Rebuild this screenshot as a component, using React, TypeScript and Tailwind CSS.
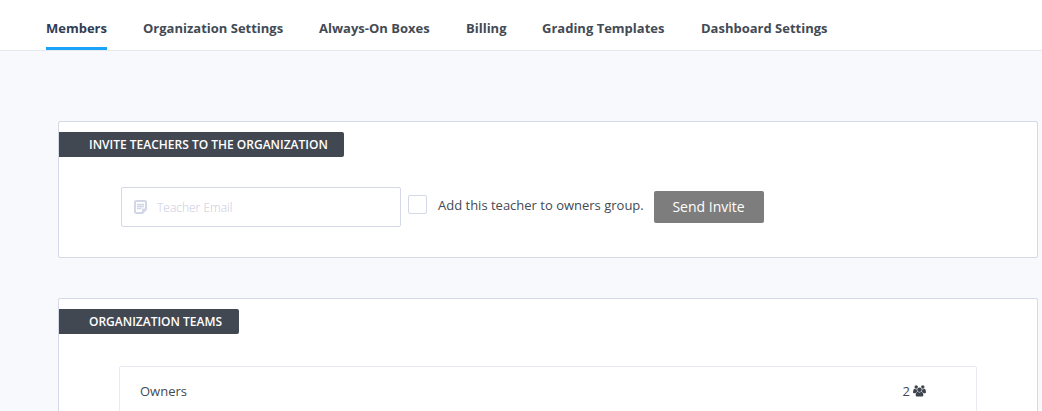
import type { ReactNode } from "react";

const tabs = [
  { label: "Members", width: "w-[61px]" },
  { label: "Organization Settings", width: "w-[140px]" },
  { label: "Always-On Boxes", width: "w-[111px]" },
  { label: "Billing", width: "w-[40px]" },
  { label: "Grading Templates", width: "w-[123px]" },
  { label: "Dashboard Settings", width: "w-[127px]" },
];

function NoteIcon() {
  return (
    <svg width="13" height="14" viewBox="0 0 13 14" className="shrink-0" fill="none" stroke="#d2d7e8">
      <path d="M2.3 1h8.4Q12 1 12 2.3V9L8.5 13H2.3Q1 13 1 11.7V2.3Q1 1 2.3 1Z" strokeWidth="2" />
      <path d="M12 9H8.5v4Z" fill="#d2d7e8" strokeWidth="1" />
      <path d="M3 4.5h7M3 6.5h7M3 8.5h4.5" strokeWidth="1.3" />
    </svg>
  );
}

function GroupIcon() {
  return (
    <svg width="13" height="12" viewBox="0 0 13 12" className="shrink-0" fill="#3d444e">
      <circle cx="3.2" cy="2" r="1.7" />
      <circle cx="9.8" cy="2" r="1.7" />
      <path d="M1.4 3.8Q2.6 4.6 3.6 4.1L4.4 6.6L3 8.2H1Q0 8.2 0 7.2Q0.1 4.3 1.4 3.8Z" />
      <path d="M11.6 3.8Q10.4 4.6 9.4 4.1L8.6 6.6L10 8.2H12Q13 8.2 13 7.2Q12.9 4.3 11.6 3.8Z" />
      <path
        d="M4.6 6.6Q6.5 8 8.4 6.6Q10.3 7.2 10.4 10Q10.4 11.5 9 11.5H4Q2.6 11.5 2.6 10Q2.7 7.2 4.6 6.6Z"
        stroke="#fff"
        strokeWidth="0.8"
        paintOrder="stroke"
      />
      <circle cx="6.5" cy="4.7" r="2.3" stroke="#fff" strokeWidth="0.8" paintOrder="stroke" />
    </svg>
  );
}

function Panel({ title, titleClass, className, children }: {
  title: string;
  titleClass: string;
  className: string;
  children: ReactNode;
}) {
  return (
    <section className={`ml-[58px] w-[980px] shrink-0 rounded-xs border border-[#d5d8e6] bg-white pt-[10px] ${className}`}>
      <h2 className={`h-[25px] rounded-r-xs bg-[#424852] pl-[30px] text-[12px] leading-[25px] font-semibold whitespace-nowrap text-white ${titleClass}`}>
        {title}
      </h2>
      {children}
    </section>
  );
}

export default function App() {
  return (
    <div className="flex h-[411px] flex-col overflow-hidden bg-[#f8f9fd] font-['Open_Sans',sans-serif] text-[13px] text-[#434a54]">
      <nav className="flex h-[51px] shrink-0 gap-9 border-b border-[#e6e9ed] bg-white pl-[46px]">
        {tabs.map((tab, i) => (
          <a
            key={tab.label}
            className={`h-[50px] pt-[18px] leading-5 font-bold whitespace-nowrap ${tab.width} ${i === 0 ? "border-b-3 border-[#1ba3f9] text-[#2f3d54]" : ""}`}
          >
            {tab.label}
          </a>
        ))}
      </nav>

      <Panel title="INVITE TEACHERS TO THE ORGANIZATION" titleClass="w-[285px]" className="mt-[70px] h-[137px]">
        <form className="mt-[30px] ml-[62px] flex">
          <div className="flex h-10 w-[280px] items-center gap-[10px] rounded-xs border border-[#d5d8e6] pl-3">
            <NoteIcon />
            <input
              type="text"
              placeholder="Teacher Email"
              className="w-56 pt-0.5 text-[12px] font-light outline-none placeholder:text-[#c6c9dc]"
            />
          </div>
          <label className="mt-2 ml-[7px] flex h-[19px] items-center">
            <input type="checkbox" className="size-[19px] appearance-none rounded-xs border border-[#d5d8e6]" />
            <span className="ml-[11px] w-[206px] leading-5 whitespace-nowrap">Add this teacher to owners group.</span>
          </label>
          <button type="button" className="mt-1 ml-[10px] h-8 w-[110px] rounded-xs bg-[#7d7d7d] pr-px pb-0.5 text-[14px] text-white">
            Send Invite
          </button>
        </form>
      </Panel>

      <Panel title="ORGANIZATION TEAMS" titleClass="w-[180px]" className="mt-10 h-[200px]">
        <div className="mt-8 ml-[60px] flex h-[100px] w-[858px] justify-between rounded-xs border border-[#e8e9f2] pt-[14px] pr-[50px] pl-5">
          <span className="leading-5">Owners</span>
          <span className="flex h-5 items-center gap-[3px] leading-5">
            2 <GroupIcon />
          </span>
        </div>
      </Panel>
    </div>
  );
}
